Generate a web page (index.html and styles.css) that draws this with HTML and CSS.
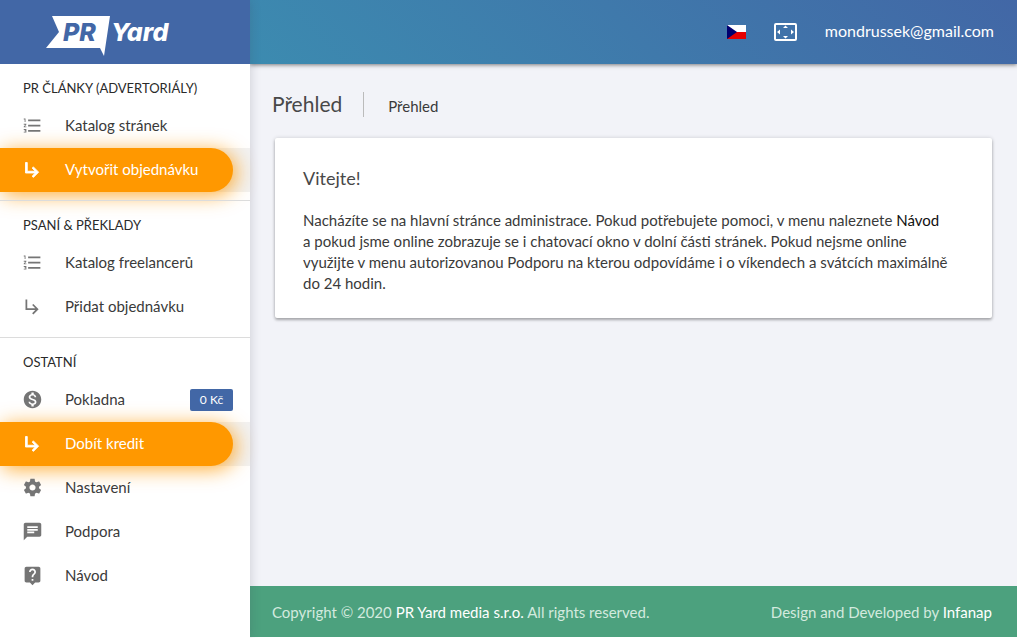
FILE: index.html
```html
<!DOCTYPE html>
<html lang="cs">
<head>
<meta charset="utf-8">
<meta name="viewport" content="width=device-width, initial-scale=1">
<title>PR Yard – Přehled</title>
<link rel="stylesheet" href="styles.css">
</head>
<body>
<svg class="sprite" aria-hidden="true">
  <symbol id="list" viewBox="0 0 24 24"><path d="M2 17h2v.5H3v1h1v.5H2v1h3v-4H2v1zm1-9h1V4H2v1h1v3zm-1 3h1.800L2 13.100v.9h3v-1H3.200L5 10.900V10H2v1zm5-6v2h14V5H7zm0 14h14v-2H7v2zm0-6h14v-2H7v2z"/></symbol>
  <symbol id="arrow" viewBox="0 0 24 24"><path d="M19 15l-6 6-1.420-1.420L15.170 16H4V4h2v10h9.170l-3.590-3.580L13 9l6 6z"/></symbol>
  <symbol id="coin" viewBox="0 0 24 24"><path d="M12 2C6.480 2 2 6.480 2 12s4.480 10 10 10 10-4.480 10-10S17.520 2 12 2zm1.410 16.090V20h-2.670v-1.930c-1.710-.36-3.160-1.460-3.270-3.400h1.960c.1 1.050.82 1.870 2.650 1.870 1.960 0 2.400-.98 2.400-1.590 0-.83-.44-1.610-2.670-2.140-2.480-.6-4.180-1.620-4.180-3.670 0-1.720 1.390-2.840 3.110-3.210V4h2.670v1.950c1.860.45 2.790 1.860 2.850 3.390H14.300c-.05-1.110-.64-1.870-2.220-1.870-1.500 0-2.400.68-2.400 1.640 0 .84.65 1.390 2.670 1.910s4.180 1.390 4.180 3.910c-.01 1.830-1.380 2.830-3.120 3.160z"/></symbol>
  <symbol id="gear" viewBox="0 0 24 24"><path d="M19.430 12.980c.04-.32.07-.64.07-.98s-.03-.66-.07-.98l2.110-1.650c.19-.15.24-.42.12-.64l-2-3.460c-.12-.22-.39-.3-.61-.22l-2.490 1c-.52-.4-1.080-.73-1.690-.98l-.38-2.650C14.460 2.180 14.250 2 14 2h-4c-.25 0-.46.18-.49.42l-.38 2.650c-.61.25-1.170.59-1.690.98l-2.490-1c-.23-.09-.49 0-.61.22l-2 3.460c-.13.22-.07.49.12.64l2.110 1.650c-.04.32-.07.65-.07.98s.03.66.07.98l-2.110 1.650c-.19.15-.24.42-.12.64l2 3.460c.12.22.39.3.61.22l2.490-1c.52.4 1.080.73 1.690.98l.38 2.650c.03.24.24.42.49.42h4c.25 0 .46-.18.49-.42l.38-2.650c.61-.25 1.170-.59 1.690-.98l2.490 1c.23.09.49 0 .61-.22l2-3.460c.12-.22.07-.49-.12-.64l-2.110-1.650zM12 15.500c-1.930 0-3.500-1.570-3.500-3.500s1.570-3.500 3.500-3.500 3.500 1.570 3.500 3.500-1.570 3.500-3.500 3.500z"/></symbol>
  <symbol id="chat" viewBox="0 0 24 24"><path d="M20 2H4c-1.100 0-1.990.9-1.990 2L2 22l4-4h14c1.100 0 2-.9 2-2V4c0-1.100-.9-2-2-2zM6 9h12v2H6V9zm8 5H6v-2h8v2zm4-6H6V6h12v2z"/></symbol>
  <symbol id="help" viewBox="0 0 24 24"><path d="M19 2H5c-1.110 0-2 .9-2 2v14c0 1.100.89 2 2 2h4l3 3 3-3h4c1.100 0 2-.9 2-2V4c0-1.100-.9-2-2-2zm-6 16h-2v-2h2v2zm2.070-7.750l-.9.920C13.450 11.900 13 12.500 13 14h-2v-.5c0-1.100.45-2.100 1.170-2.830l1.240-1.260c.37-.36.59-.86.59-1.410 0-1.100-.9-2-2-2s-2 .9-2 2H8c0-2.210 1.790-4 4-4s4 1.790 4 4c0 .88-.36 1.680-.93 2.250z"/></symbol>
</svg>

<div class="app">
  <aside class="sidebar">
    <a class="brand" href="#" aria-label="PR Yard">
      <svg class="logo" viewBox="0 0 126 42" role="img" aria-label="PR Yard">
        <path class="logo-flag" d="M6 1H64L58 41L54 33H0L13 17Z"/>
        <text class="logo-pr" x="17" y="26">PR</text>
        <text class="logo-yard" x="65" y="26">Yard</text>
      </svg>
    </a>
    <nav class="menu">
      <section class="group">
        <h2 class="group-title">PR ČLÁNKY (ADVERTORIÁLY)</h2>
        <a class="item" href="#"><svg class="icon"><use href="#list"/></svg><span>Katalog stránek</span></a>
        <div class="active-row"><a class="item active" href="#"><svg class="icon"><use href="#arrow"/></svg><span>Vytvořit objednávku</span></a></div>
      </section>
      <section class="group">
        <h2 class="group-title">PSANÍ &amp; PŘEKLADY</h2>
        <a class="item" href="#"><svg class="icon"><use href="#list"/></svg><span>Katalog freelancerů</span></a>
        <a class="item" href="#"><svg class="icon"><use href="#arrow"/></svg><span>Přidat objednávku</span></a>
      </section>
      <section class="group">
        <h2 class="group-title">OSTATNÍ</h2>
        <a class="item" href="#"><svg class="icon"><use href="#coin"/></svg><span>Pokladna</span><span class="badge">0 Kč</span></a>
        <div class="active-row"><a class="item active" href="#"><svg class="icon"><use href="#arrow"/></svg><span>Dobít kredit</span></a></div>
        <a class="item" href="#"><svg class="icon"><use href="#gear"/></svg><span>Nastavení</span></a>
        <a class="item" href="#"><svg class="icon"><use href="#chat"/></svg><span>Podpora</span></a>
        <a class="item" href="#"><svg class="icon"><use href="#help"/></svg><span>Návod</span></a>
      </section>
    </nav>
  </aside>

  <div class="page">
    <header class="topbar">
      <button class="bar-button" type="button" aria-label="Čeština">
        <svg class="flag" viewBox="0 0 19 14"><path fill="#fff" d="M0 0h19v7H0z"/><path fill="#e60000" d="M0 7h19v7H0z"/><path fill="#00006e" d="M0 0l10 7-10 7z"/></svg>
      </button>
      <button class="bar-button" type="button" aria-label="Celá obrazovka">
        <svg class="fullscreen" viewBox="0 0 23 18"><rect x="1" y="1" width="21" height="16" rx="1" fill="none" stroke="#fff" stroke-width="2"/><path fill="#fff" d="M11.500 2.500l2.500 2.500H9zM11.500 15.500L9 13h5zM3 9l3-2.500v5zM20 9l-3-2.500v5z"/></svg>
      </button>
      <a class="account" href="#">mondrussek@gmail.com</a>
    </header>

    <main class="content">
      <div class="heading">
        <h1 class="title">Přehled</h1>
        <span class="crumb">Přehled</span>
      </div>
      <article class="card">
        <h2 class="card-title">Vitejte!</h2>
        <p class="card-text">Nacházíte se na hlavní stránce administrace. Pokud potřebujete pomoci, v menu naleznete <span class="strong">Návod</span><br>a pokud jsme online zobrazuje se i chatovací okno v dolní části stránek. Pokud nejsme online<br>využijte v menu autorizovanou Podporu na kterou odpovídáme i o víkendech a svátcích maximálně<br>do 24 hodin.</p>
      </article>
    </main>

    <footer class="footer">
      <span>Copyright © 2020 <a href="#">PR Yard media s.r.o.</a> All rights reserved.</span>
      <span>Design and Developed by <a href="#">Infanap</a></span>
    </footer>
  </div>
</div>
</body>
</html>
```
FILE: styles.css
```css
* { box-sizing: border-box; }

body {
  margin: 0;
  background: #fff;
  color: #3a3a3a;
  font-family: Lato, "Noto Sans", sans-serif;
  font-size: 15px;
  line-height: 21px;
}

a { color: inherit; text-decoration: none; }
h1, h2, p { margin: 0; font-weight: 400; }
.sprite { display: none; }

.app {
  display: grid;
  grid-template-columns: 250px 1fr;
  min-height: 100vh;
}

.sidebar {
  z-index: 2;
  background: #fff;
  box-shadow: 0 0 10px rgba(60, 60, 80, .22);
}

.brand {
  display: flex;
  align-items: center;
  height: 64px;
  padding: 8px 46px 0;
  background: #4267a6;
}

.logo { width: 126px; height: 42px; overflow: visible; }
.logo-flag { fill: #fff; }
.logo-pr, .logo-yard {
  font-family: Inter, sans-serif;
  font-size: 25px;
  font-style: italic;
  font-weight: 800;
}
.logo-pr { fill: #4267a6; }
.logo-yard { fill: #fff; }

.group { padding: 8px 0; }
.group + .group { border-top: 1px solid #dcdcdc; }

.group-title {
  padding: 0 23px;
  font-size: 13px;
  line-height: 32px;
  color: #2a2a2a;
}

.item {
  display: flex;
  align-items: center;
  height: 44px;
  padding: 0 17px 2px 22px;
  gap: 22px;
}

.icon {
  flex: none;
  width: 21px;
  height: 21px;
  fill: #757575;
}

.active-row {
  padding-right: 17px;
  background: #f2f2f2;
}

.active {
  border-radius: 0 22px 22px 0;
  background: #ff9800;
  box-shadow: 3px 3px 20px rgba(255, 152, 0, .8);
  color: #fff;
}
.active .icon { fill: #fff; stroke: #fff; }

.badge {
  min-width: 43px;
  margin: 2px 0 0 auto;
  border-radius: 2px;
  background: #4267a6;
  color: #fff;
  font-size: 12px;
  line-height: 22px;
  text-align: center;
}

.page {
  display: flex;
  flex-direction: column;
  min-width: 0;
  padding-bottom: 1px;
}

.topbar {
  z-index: 1;
  display: flex;
  align-items: center;
  justify-content: flex-end;
  gap: 28px;
  height: 64px;
  padding-right: 23px;
  background: linear-gradient(45deg, #3c8bb0, #4267a6);
  box-shadow: 0 1px 4px rgba(0, 0, 0, .5);
  color: #fff;
}

.bar-button {
  display: flex;
  padding: 0;
  border: 0;
  background: none;
}
.flag { width: 19px; height: 14px; }
.fullscreen { width: 23px; height: 18px; }
.account {
  padding-bottom: 3px;
  font-size: 16px;
}

.content {
  flex: 1;
  padding: 28px 25px 0;
  background: #f2f3f8;
}

.heading {
  display: flex;
  align-items: center;
  margin-left: -3px;
}
.title {
  padding: 0 21px 2px 0;
  border-right: 1px solid #bbb;
  font-size: 21px;
  line-height: 23px;
  color: #484848;
}
.crumb { padding: 4px 0 0 24px; }

.card {
  margin-top: 21px;
  padding: 28px 28px 24px;
  border-radius: 2px;
  background: #fff;
  box-shadow: 0 2px 3px rgba(0, 0, 0, .28), 0 0 4px rgba(0, 0, 0, .14);
}
.card-title {
  margin-bottom: 20px;
  font-size: 18px;
  line-height: 24px;
  color: #484848;
}
.strong { color: #111; }

.footer {
  display: flex;
  align-items: center;
  justify-content: space-between;
  height: 51px;
  padding: 2px 25px 0 22px;
  background: #4ca17e;
  color: #d3eadf;
}
.footer a { color: #fff; }
```
